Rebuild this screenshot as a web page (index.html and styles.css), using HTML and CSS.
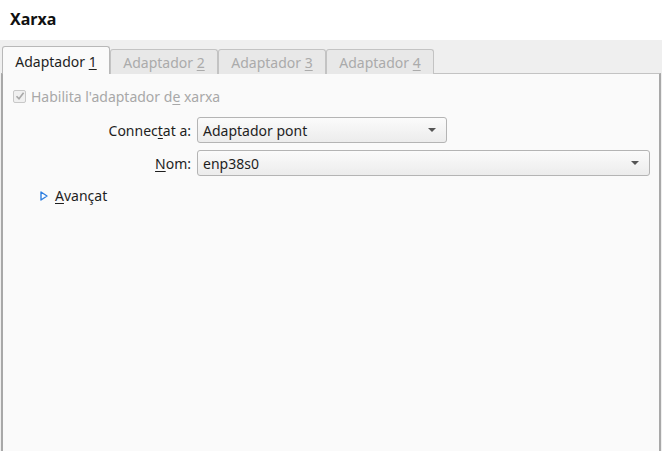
FILE: index.html
```html
<!DOCTYPE html>
<html>
<head>
<meta charset="utf-8">
<link rel="stylesheet" href="styles.css">
</head>
<body>
<div class="header"><h1 class="title">Xarxa</h1></div>
<div class="main">
  <div class="tabs">
    <div class="tab active">Adaptador <u>1</u></div>
    <div class="tab">Adaptador <u>2</u></div>
    <div class="tab">Adaptador <u>3</u></div>
    <div class="tab">Adaptador <u>4</u></div>
  </div>
  <div class="pane">
    <div class="check-row">
      <span class="checkbox"><svg width="10" height="10" viewBox="0 0 10 10"><path d="M1.5 5.2 L4 7.8 L8.6 1.8" fill="none" stroke="#a8a8a8" stroke-width="1.6"/></svg></span>
      <span class="check-label">Habilita l'adaptador d<u>e</u> xarxa</span>
    </div>
    <div class="form">
      <label class="lbl">Connec<u>t</u>at a:</label>
      <div class="combo combo-short"><span>Adaptador pont</span><span class="arrow"></span></div>
      <label class="lbl"><u>N</u>om:</label>
      <div class="combo combo-long"><span>enp38s0</span><span class="arrow"></span></div>
    </div>
    <div class="advanced">
      <svg class="tri" width="8" height="10" viewBox="0 0 8 10"><path d="M1 1 L7 5 L1 9 Z" fill="#fff" stroke="#2f7fe0" stroke-width="1.4" stroke-linejoin="round"/></svg>
      <span><u>A</u>vançat</span>
    </div>
  </div>
</div>
</body>
</html>
```
FILE: styles.css
```css
* { box-sizing: border-box; }
html, body { margin: 0; padding: 0; }
body {
  width: 662px;
  height: 451px;
  overflow: hidden;
  font-family: "Noto Sans", "DejaVu Sans", sans-serif;
  font-size: 14px;
  color: #1e1e1e;
  background: #efefef;
}
u { text-decoration: underline; text-underline-offset: 2px; }
.header {
  background: #ffffff;
  height: 40px;
  padding: 9px 10px 0;
}
.title {
  margin: 0;
  font-size: 16px;
  font-weight: bold;
  color: #111;
  line-height: 20px;
}
.main {
  padding: 6px 1px 0 1px;
  height: 411px;
  display: flex;
  flex-direction: column;
}
.tabs {
  display: flex;
  align-items: flex-end;
  padding-left: 1px;
  position: relative;
  z-index: 1;
  margin-bottom: -1px;
}
.tab {
  height: 25px;
  width: 108px;
  border: 1px solid #c3c3c3;
  border-bottom: none;
  border-radius: 3px 3px 0 0;
  background: #e8e8e8;
  color: #ababab;
  text-align: center;
  line-height: 25px;
}
.tab.active {
  height: 28px;
  line-height: 30px;
  background: #fafafa;
  color: #1e1e1e;
  border-color: #b8b8b8;
}
.pane {
  flex: 1;
  background: #fafafa;
  border: 1px solid #c3c3c3;
  border-left: 2px solid #a8a8a8;
  border-right: 2px solid #a8a8a8;
  border-bottom: none;
  padding: 14px 9px 0 10px;
}
.check-row {
  display: flex;
  align-items: center;
  gap: 5px;
  height: 16px;
}
.checkbox {
  width: 13px;
  height: 13px;
  border: 1px solid #c8c8c8;
  border-radius: 2px;
  background: #f0f0f0;
  display: flex;
  align-items: center;
  justify-content: center;
}
.check-label { color: #a8a8a8; }
.form {
  display: grid;
  grid-template-columns: 178px 1fr;
  column-gap: 6px;
  row-gap: 7px;
  margin-top: 13px;
  align-items: center;
}
.lbl { text-align: right; }
.combo {
  height: 26px;
  border: 1px solid #b4b4b4;
  border-radius: 3px;
  background: linear-gradient(#fbfbfb, #ececec);
  display: flex;
  align-items: center;
  justify-content: space-between;
  padding: 0 10px 0 5px;
}
.combo-short { width: 250px; }
.combo-long { width: 453px; }
.arrow {
  width: 0; height: 0;
  border-left: 4px solid transparent;
  border-right: 4px solid transparent;
  border-top: 4px solid #555;
}
.advanced {
  display: flex;
  align-items: center;
  gap: 7px;
  margin-top: 10px;
  padding-left: 27px;
}
```
